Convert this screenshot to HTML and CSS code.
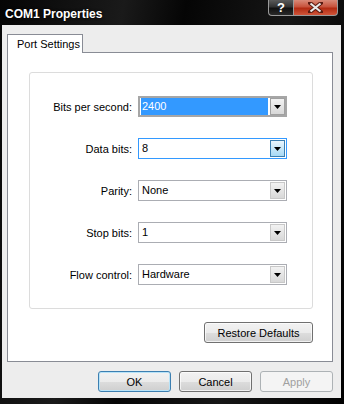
FILE: index.html
```html
<!DOCTYPE html>
<html lang="en">
<head>
    <meta charset="UTF-8">
    <title>COM1 Properties</title>
    <link rel="stylesheet" href="styles.css">
</head>
<body>
    <div class="window">
        <!-- Title Bar -->
        <div class="titlebar">
            <span class="title">COM1 Properties</span>
            <div class="caption-buttons">
                <span class="cap-btn help">?</span>
                <span class="cap-btn close">
                    <svg width="15" height="11" viewBox="0 0 15 11">
                        <path d="M2 1 L13 10 M13 1 L2 10" stroke="#5a1a10" stroke-width="4" stroke-linecap="square"/>
                        <path d="M2.5 1.5 L12.5 9.5 M12.5 1.5 L2.5 9.5" stroke="#e8e8e8" stroke-width="2.2"/>
                    </svg>
                </span>
            </div>
        </div>

        <div class="client">
            <!-- Tabs -->
            <div class="tabs">
                <div class="tab">Port Settings</div>
            </div>

            <div class="panel">
                <div class="group">
                    <label>Bits per second:</label>
                    <div class="combo combo-focus">
                        <span class="value selected">2400</span>
                        <span class="arrow"><svg width="7" height="4" viewBox="0 0 7 4"><path d="M0 0 H7 L3.5 4 Z" fill="#000"/></svg></span>
                    </div>

                    <label>Data bits:</label>
                    <div class="combo combo-hover">
                        <span class="value">8</span>
                        <span class="arrow"><svg width="7" height="4" viewBox="0 0 7 4"><path d="M0 0 H7 L3.5 4 Z" fill="#000"/></svg></span>
                    </div>

                    <label>Parity:</label>
                    <div class="combo">
                        <span class="value">None</span>
                        <span class="arrow"><svg width="7" height="4" viewBox="0 0 7 4"><path d="M0 0 H7 L3.5 4 Z" fill="#000"/></svg></span>
                    </div>

                    <label>Stop bits:</label>
                    <div class="combo">
                        <span class="value">1</span>
                        <span class="arrow"><svg width="7" height="4" viewBox="0 0 7 4"><path d="M0 0 H7 L3.5 4 Z" fill="#000"/></svg></span>
                    </div>

                    <label>Flow control:</label>
                    <div class="combo">
                        <span class="value">Hardware</span>
                        <span class="arrow"><svg width="7" height="4" viewBox="0 0 7 4"><path d="M0 0 H7 L3.5 4 Z" fill="#000"/></svg></span>
                    </div>
                </div>

                <div class="restore-row">
                    <button class="btn restore">Restore Defaults</button>
                </div>
            </div>

            <!-- Dialog Buttons -->
            <div class="dialog-buttons">
                <button class="btn default">OK</button>
                <button class="btn">Cancel</button>
                <button class="btn disabled">Apply</button>
            </div>
        </div>
    </div>
</body>
</html>
```

FILE: styles.css
```css
body {
    margin: 0;
    background-color: #000;
    font-family: "Liberation Sans", Arial, sans-serif;
    font-size: 11px;
    overflow: hidden;
}

.window {
    width: 344px;
    height: 404px;
    display: flex;
    flex-direction: column;
    background: linear-gradient(100deg, #050505 0%, #1a1a1a 30%, #050505 45%, #161616 70%, #000 100%);
}

/* Title Bar */
.titlebar {
    height: 25px;
    display: flex;
    align-items: flex-start;
    padding-left: 5px;
    flex-shrink: 0;
}

.title {
    color: #fff;
    font-weight: bold;
    font-size: 12px;
    margin-top: 7px;
    text-shadow: 0 0 3px #000;
}

.caption-buttons {
    margin-left: auto;
    margin-right: 6px;
    display: flex;
}

.cap-btn {
    height: 16px;
    display: flex;
    align-items: center;
    justify-content: center;
    border: 1px solid #9a9a9a;
    border-top: none;
    box-sizing: border-box;
}

.help {
    width: 25px;
    color: #fff;
    font-weight: bold;
    font-size: 13px;
    border-radius: 0 0 0 4px;
    border-right: none;
    background: linear-gradient(#5a5a5a 0%, #333 45%, #111 55%, #2a2a2a 100%);
}

.close {
    width: 45px;
    border-radius: 0 0 4px 0;
    background: linear-gradient(#d98a78 0%, #c8533c 45%, #b22b12 55%, #d0553a 100%);
}

/* Client Area */
.client {
    flex: 1;
    margin: 0 3px 6px 2px;
    padding: 8px 8px 0 5px;
    background-color: #ededed;
}

.tabs {
    display: flex;
    height: 19px;
}

.tab {
    width: 76px;
    box-sizing: border-box;
    background-color: #fff;
    border: 1px solid #898c95;
    border-bottom: none;
    padding: 3px 0 0 9px;
    color: #000;
    position: relative;
    top: 1px;
    height: 19px;
}

.panel {
    height: 310px;
    box-sizing: border-box;
    background-color: #fff;
    border: 1px solid #898c95;
    display: flex;
    flex-direction: column;
}

.group {
    margin: 19px 19px 0 21px;
    border: 1px solid #dcdcdc;
    border-radius: 3px;
    padding: 23px 0;
    display: grid;
    grid-template-columns: 102px 149px;
    column-gap: 6px;
    row-gap: 21px;
    align-items: center;
}

.group label {
    text-align: right;
    color: #000;
}

/* Combo Boxes */
.combo {
    height: 21px;
    box-sizing: border-box;
    border: 1px solid #abadb3;
    display: flex;
    align-items: center;
    padding: 1px 1px 1px 2px;
    background-color: #fff;
}

.combo .value {
    flex: 1;
    height: 17px;
    line-height: 17px;
    padding-left: 1px;
}

.combo .selected {
    background-color: #3399ff;
    color: #fff;
    margin-right: 2px;
}

.combo .arrow {
    width: 15px;
    height: 17px;
    box-sizing: border-box;
    border: 1px solid #c8c8c8;
    background: linear-gradient(#f2f2f2, #d8d8d8);
    display: flex;
    align-items: center;
    justify-content: center;
}

.combo-focus {
    border: 2px solid #a6a6a6;
    padding: 0 0 0 1px;
}

.combo-focus .arrow {
    border-color: #a0a0a0;
}

.combo-hover {
    border-color: #3399ff;
}

.combo-hover .arrow {
    border-color: #3c7fb1;
    background: linear-gradient(#eaf6fd, #a7d9f5);
}

/* Buttons */
.btn {
    font-family: "Liberation Sans", Arial, sans-serif;
    font-size: 11px;
    color: #000;
    height: 21px;
    width: 73px;
    padding: 0;
    border: 1px solid #707070;
    border-radius: 3px;
    background: linear-gradient(#f2f2f2 0%, #ebebeb 50%, #dddddd 51%, #cfcfcf 100%);
    box-shadow: inset 0 0 0 1px rgba(255, 255, 255, 0.7);
}

.restore-row {
    display: flex;
    justify-content: flex-end;
    margin: 13px 19px 0 0;
}

.restore {
    width: 109px;
}

.dialog-buttons {
    display: flex;
    justify-content: flex-end;
    gap: 8px;
    margin-top: 9px;
}

.default {
    border-color: #3c7fb1;
    box-shadow: inset 0 0 0 1px #b8e3f8;
}

.disabled {
    color: #a0a0a0;
    border-color: #adb2b5;
    background: #f4f4f4;
    box-shadow: none;
}
```
